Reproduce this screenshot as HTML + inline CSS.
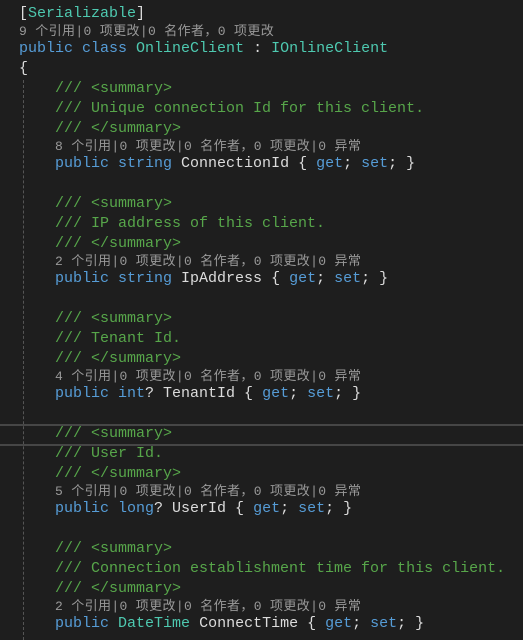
<!DOCTYPE html>
<html><head><meta charset="utf-8"><style>
html,body{margin:0;padding:0;background:#1e1e1e;width:523px;height:640px;overflow:hidden;position:relative}
.l{position:absolute;left:19px;height:20px;line-height:20px;font-family:"Liberation Mono",monospace;font-size:15px;color:#dcdcdc;white-space:pre}
.s{position:absolute;left:19px;height:15px;line-height:15px;font-family:"Liberation Mono","Noto Sans CJK SC",monospace;font-size:13px;letter-spacing:0.35px;color:#999;white-space:pre}
.s.i{left:55px}
.k{color:#569cd6}.t{color:#4ec9b0}.c{color:#57a64a}
.g{position:absolute;left:23px;top:80px;height:560px;border-left:1px dashed #555}
.cur{position:absolute;left:0;top:424px;width:523px;height:18px;border-top:2px solid #464646;border-bottom:2px solid #464646}
</style></head><body>
<div class="g"></div>
<div class="cur"></div>
<div class="l" style="top:4px">[<span class="t">Serializable</span>]</div>
<div class="s" style="top:24px">9 个引用|0 项更改|0 名作者，0 项更改</div>
<div class="l" style="top:39px"><span class="k">public class</span> <span class="t">OnlineClient</span> : <span class="t">IOnlineClient</span></div>
<div class="l" style="top:59px">{</div>

<div class="l c" style="top:79px">    /// &lt;summary&gt;</div>
<div class="l c" style="top:99px">    /// Unique connection Id for this client.</div>
<div class="l c" style="top:119px">    /// &lt;/summary&gt;</div>
<div class="s i" style="top:139px">8 个引用|0 项更改|0 名作者，0 项更改|0 异常</div>
<div class="l" style="top:154px">    <span class="k">public string</span> ConnectionId { <span class="k">get</span>; <span class="k">set</span>; }</div>

<div class="l c" style="top:194px">    /// &lt;summary&gt;</div>
<div class="l c" style="top:214px">    /// IP address of this client.</div>
<div class="l c" style="top:234px">    /// &lt;/summary&gt;</div>
<div class="s i" style="top:254px">2 个引用|0 项更改|0 名作者，0 项更改|0 异常</div>
<div class="l" style="top:269px">    <span class="k">public string</span> IpAddress { <span class="k">get</span>; <span class="k">set</span>; }</div>

<div class="l c" style="top:309px">    /// &lt;summary&gt;</div>
<div class="l c" style="top:329px">    /// Tenant Id.</div>
<div class="l c" style="top:349px">    /// &lt;/summary&gt;</div>
<div class="s i" style="top:369px">4 个引用|0 项更改|0 名作者，0 项更改|0 异常</div>
<div class="l" style="top:384px">    <span class="k">public int</span>? TenantId { <span class="k">get</span>; <span class="k">set</span>; }</div>

<div class="l c" style="top:424px">    /// &lt;summary&gt;</div>
<div class="l c" style="top:444px">    /// User Id.</div>
<div class="l c" style="top:464px">    /// &lt;/summary&gt;</div>
<div class="s i" style="top:484px">5 个引用|0 项更改|0 名作者，0 项更改|0 异常</div>
<div class="l" style="top:499px">    <span class="k">public long</span>? UserId { <span class="k">get</span>; <span class="k">set</span>; }</div>

<div class="l c" style="top:539px">    /// &lt;summary&gt;</div>
<div class="l c" style="top:559px">    /// Connection establishment time for this client.</div>
<div class="l c" style="top:579px">    /// &lt;/summary&gt;</div>
<div class="s i" style="top:599px">2 个引用|0 项更改|0 名作者，0 项更改|0 异常</div>
<div class="l" style="top:614px">    <span class="k">public</span> <span class="t">DateTime</span> ConnectTime { <span class="k">get</span>; <span class="k">set</span>; }</div>
</body></html>
